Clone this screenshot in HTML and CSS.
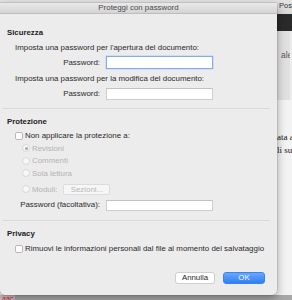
FILE: index.html
```html
<!DOCTYPE html>
<html lang="it">
<head>
<meta charset="utf-8">
<title>Proteggi con password</title>
<link rel="stylesheet" href="styles.css">
</head>
<body>
<div class="app">
  <div class="toolbar"><span class="tb-text">Post</span></div>
  <div class="darkbar"></div>
  <div class="ribbon"><span class="ribbon-text">ale</span></div>
  <div class="doc">
    <p class="doc-line first">ata a</p>
    <p class="doc-line">li su</p>
  </div>
  <div class="status"><span class="status-text">aac</span></div>
</div>

<div class="dialog">
  <div class="titlebar">Proteggi con password</div>
  <div class="content">
    <div class="heading h-sec">Sicurezza</div>
    <div class="text t1">Imposta una password per l'apertura del documento:</div>
    <div class="field-row r1">
      <span class="label">Password:</span>
      <span class="field focus"></span>
    </div>
    <div class="text t2">Imposta una password per la modifica del documento:</div>
    <div class="field-row r2">
      <span class="label">Password:</span>
      <span class="field"></span>
    </div>
    <div class="sep s1"></div>

    <div class="heading h-prot">Protezione</div>
    <div class="check-row c1"><span class="checkbox"></span><span>Non applicare la protezione a:</span></div>
    <div class="radio-row rr1"><span class="radio on"></span><span>Revisioni</span></div>
    <div class="radio-row"><span class="radio"></span><span>Commenti</span></div>
    <div class="radio-row"><span class="radio"></span><span>Sola lettura</span></div>
    <div class="radio-row rr4"><span class="radio"></span><span>Moduli:</span><span class="btn-small">Sezioni...</span></div>
    <div class="field-row r3">
      <span class="label">Password (facoltativa):</span>
      <span class="field"></span>
    </div>
    <div class="sep s2"></div>

    <div class="heading h-priv">Privacy</div>
    <div class="check-row c2"><span class="checkbox"></span><span>Rimuovi le informazioni personali dal file al momento del salvataggio</span></div>

    <div class="buttons">
      <span class="btn">Annulla</span>
      <span class="btn primary">OK</span>
    </div>
  </div>
</div>
</body>
</html>
```

FILE: styles.css
```css
* { box-sizing: border-box; }
html, body { margin: 0; padding: 0; }
body {
  width: 292px;
  height: 300px;
  overflow: hidden;
  position: relative;
  font-family: "Liberation Sans", Arial, sans-serif;
  background: #efefef;
}

/* background app window */
.app { display: flex; flex-direction: column; width: 292px; height: 300px; }
.toolbar {
  height: 14px;
  background: linear-gradient(#e4e4e4, #d9d9d9);
  padding-left: 279px;
  font-size: 7.5px;
  line-height: 11px;
  color: #333;
  white-space: nowrap;
  overflow: hidden;
}
.darkbar { height: 17px; background: #2a2a2a; }
.ribbon {
  height: 69px;
  background: #e1e1e1;
  padding-left: 281px;
  padding-top: 19px;
  font-size: 8.5px;
  line-height: 10px;
  color: #555;
  white-space: nowrap;
  overflow: hidden;
  border-right: 2px solid #ececec;
}
.doc {
  height: 195px;
  background: #f3f3f3;
  padding-left: 277px;
  padding-top: 31px;
  font-family: "Liberation Serif", "Times New Roman", serif;
  font-size: 9px;
  color: #111;
  white-space: nowrap;
  overflow: hidden;
}
.doc-line { margin: 0; line-height: 13px; }
.status {
  height: 5px;
  background: #a8a8a8;
  font-size: 7px;
  line-height: 7px;
  overflow: hidden;
}
.status-text { color: #c0393b; background: #d9b8bc; padding: 0 2px; }

/* dialog */
.dialog {
  position: absolute;
  left: 0;
  top: 3px;
  width: 277px;
  height: 292px;
  background: #ececec;
  border-radius: 0 0 5px 5px;
  box-shadow: 0 3px 10px rgba(0, 0, 0, 0.35), 0 0 0 0.5px rgba(0,0,0,0.15);
  color: #2a2a2a;
  font-size: 7.9px;
}
.titlebar {
  height: 11px;
  background: linear-gradient(#e9e9e9, #d4d4d4);
  border-bottom: 1px solid #bdbdbd;
  text-align: center;
  font-size: 7.9px;
  line-height: 10px;
  color: #4a4a4a;
}
.content { display: flex; flex-direction: column; }

.heading { font-weight: bold; font-size: 7.8px; line-height: 10px; padding-left: 7px; color: #222; }
.text { line-height: 10px; padding-left: 15px; }

.h-sec { margin-top: 14px; }
.t1 { margin-top: 5px; }
.field-row {
  display: grid;
  grid-template-columns: 100px 107px;
  column-gap: 6px;
  align-items: center;
  height: 12px;
}
.r1 { margin-top: 3px; height: 13px; }
.t2 { margin-top: 5px; }
.r2 { margin-top: 4px; }
.label { text-align: right; line-height: 10px; }
.field {
  display: block;
  height: 12px;
  background: #fff;
  border: 1px solid #cdcdcd;
  border-top-color: #c2c2c2;
}
.field.focus { height: 13px; border: 1.5px solid #86abea; box-shadow: 0 0 0 0.5px #b8cef3; }

.sep { height: 1px; background: #d9d9d9; margin-left: 3px; width: 267px; }
.s1 { margin-top: 8px; }
.h-prot { margin-top: 8px; }

.check-row { display: flex; align-items: center; gap: 2px; padding-left: 15px; height: 10px; line-height: 10px; }
.c1 { margin-top: 4px; }
.checkbox {
  width: 8px; height: 8px;
  background: #fff;
  border: 1px solid #b9b9b9;
  border-radius: 2px;
  flex: none;
}

.radio-row { display: flex; align-items: center; gap: 2px; padding-left: 22px; height: 12.6px; color: #b3b3b3; }
.rr1 { margin-top: 1px; }
.radio {
  width: 8px; height: 8px;
  border-radius: 50%;
  background: #f7f7f7;
  border: 1px solid #d8d8d8;
  flex: none;
  display: flex; align-items: center; justify-content: center;
}
.radio.on::after { content: ""; width: 3px; height: 3px; border-radius: 50%; background: #a8a8a8; }
.rr4 { margin-top: 4px; height: 11px; }
.btn-small {
  margin-left: 4px;
  width: 47px; height: 11px;
  background: #f6f6f6;
  border: 1px solid #dcdcdc;
  border-radius: 2px;
  text-align: center;
  line-height: 9px;
  color: #b6b6b6;
}
.r3 { margin-top: 5px; height: 11px; }
.r3 .field { height: 11px; }

.s2 { margin-top: 9px; }
.h-priv { margin-top: 8px; }
.c2 { margin-top: 5px; }

.buttons { display: flex; justify-content: flex-end; gap: 8px; padding-right: 12px; margin-top: 18px; }
.btn {
  width: 40px; height: 12px;
  background: #fff;
  border: 1px solid #cfcfcf;
  border-radius: 3px;
  text-align: center;
  line-height: 10px;
  font-size: 7.8px;
  color: #262626;
}
.btn.primary {
  width: 42px;
  background: linear-gradient(#69a8fa, #2f7ff6);
  border-color: #3b84f0;
  color: #fff;
}
```
